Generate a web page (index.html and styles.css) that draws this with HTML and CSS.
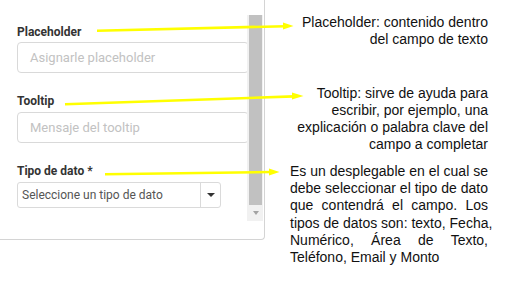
FILE: index.html
```html
<!DOCTYPE html>
<html lang="es">
<head>
<meta charset="utf-8">
<link rel="stylesheet" href="styles.css">
</head>
<body>
<div class="page">
  <div class="panel">
    <div class="form">
      <div class="label l1">Placeholder</div>
      <div class="input">Asignarle placeholder</div>
      <div class="label l2">Tooltip</div>
      <div class="input">Mensaje del tooltip</div>
      <div class="label l3">Tipo de dato *</div>
      <div class="select">
        <span class="select-text">Seleccione un tipo de dato</span>
        <span class="select-btn"><span class="caret"></span></span>
      </div>
    </div>
    <div class="scrollbar">
      <div class="thumb"></div>
      <div class="down"><span class="down-caret"></span></div>
    </div>
  </div>
  <div class="notes">
    <p class="note n1"><span class="r">Placeholder: contenido dentro</span><span class="r">del campo de texto</span></p>
    <p class="note n2"><span class="r">Tooltip: sirve de ayuda para</span><span class="r">escribir, por ejemplo, una</span><span class="r">explicación o palabra clave del</span><span class="r">campo a completar</span></p>
    <p class="note n3"><span class="j">Es un desplegable en el cual se</span><span class="j">debe seleccionar el tipo de dato</span><span class="j">que contendrá el campo. Los</span><span class="j">tipos de datos son: texto, Fecha,</span><span class="j">Numérico, Área de Texto,</span><span class="l">Teléfono, Email y Monto</span></p>
  </div>
  <svg class="arrows" width="522" height="301" viewBox="0 0 522 301">
    <g stroke="#ffff00" stroke-width="2.6" fill="#ffff00">
      <line x1="97" y1="30.8" x2="285" y2="26.2"/>
      <line x1="65" y1="104.2" x2="294" y2="96.4"/>
      <line x1="105" y1="174.2" x2="270" y2="172"/>
    </g>
    <g fill="#ffff00">
      <polygon points="283,22.5 293.5,26 283,29.5"/>
      <polygon points="292,92.5 303.5,96 292,99.5"/>
      <polygon points="269,168.5 279.5,172 269,175.5"/>
    </g>
  </svg>
</div>
</body>
</html>
```
FILE: styles.css
```css
* { box-sizing: border-box; }
html, body { margin: 0; padding: 0; background: #fff; }
.page {
  position: relative;
  width: 522px;
  height: 301px;
  display: flex;
  align-items: flex-start;
  overflow: hidden;
}
.panel {
  width: 265px;
  height: 240px;
  display: flex;
  border-right: 1px solid #d4d4d4;
  border-bottom: 1px solid #d4d4d4;
  border-bottom-right-radius: 4px;
  background: #fff;
  flex-shrink: 0;
}
.form {
  width: 247px;
  padding-left: 17px;
  font-family: Roboto, "Noto Sans", sans-serif;
}
.label {
  font-size: 12px;
  line-height: 16px;
  height: 16px;
  font-weight: 700;
  color: #333;
}
.l1 { margin-top: 24px; margin-bottom: 2px; }
.l2 { margin-top: 20px; margin-bottom: 3px; }
.l3 { margin-top: 20px; margin-bottom: 3px; }
.input {
  width: 232px;
  height: 31px;
  border: 1px solid #d9d9d9;
  border-radius: 4px;
  padding-left: 12px;
  font-size: 13px;
  line-height: 29px;
  color: #c2c2c2;
}
.select {
  width: 204px;
  height: 26px;
  border: 1px solid #dadada;
  border-radius: 3px;
  display: flex;
  align-items: stretch;
}
.select-text {
  flex: 1;
  padding-left: 4px;
  font-size: 12px;
  line-height: 24px;
  color: #555;
}
.select-btn {
  width: 20px;
  border-left: 1px solid #dadada;
  display: flex;
  align-items: center;
  justify-content: center;
}
.caret {
  width: 0;
  height: 0;
  border-left: 4px solid transparent;
  border-right: 4px solid transparent;
  border-top: 4px solid #333;
  margin-left: 1px;
}
.scrollbar {
  width: 16px;
  margin-top: 15px;
  height: 206px;
  background: #f1f1f1;
  display: flex;
  flex-direction: column;
}
.thumb {
  margin-left: 2px;
  width: 13px;
  height: 190px;
  background: #c1c1c1;
}
.down {
  flex: 1;
  display: flex;
  align-items: center;
  justify-content: center;
}
.down-caret {
  width: 0;
  height: 0;
  border-left: 3.5px solid transparent;
  border-right: 3.5px solid transparent;
  border-top: 4px solid #a3a3a3;
  margin-left: 1px;
}
.notes {
  margin-left: 25px;
  width: 198px;
  font-family: "Liberation Sans", Arial, sans-serif;
  font-size: 14px;
  line-height: 17.3px;
  color: #111;
}
.note { margin: 0; }
.note span { display: block; white-space: nowrap; }
.n1 { margin-top: 14px; }
.n2 { margin-top: 36px; }
.n3 { margin-top: 9px; }
.r { text-align: right; }
.j { text-align: justify; text-align-last: justify; }
.l { text-align: left; }
.arrows {
  position: absolute;
  left: 0;
  top: 0;
  pointer-events: none;
}
```
